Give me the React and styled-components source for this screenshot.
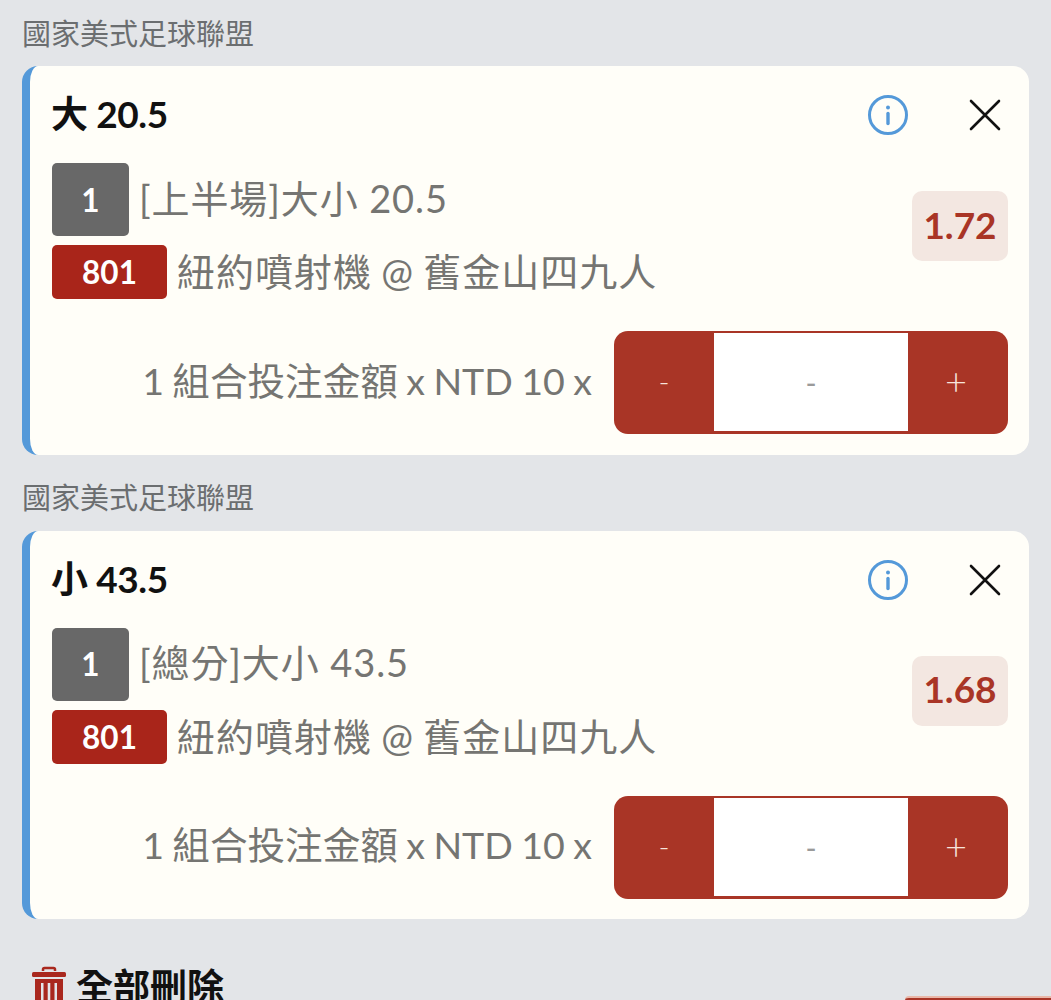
import React from "react";
import styled, { createGlobalStyle } from "styled-components";

const GlobalStyle = createGlobalStyle`
  html, body {
    margin: 0;
    height: 1000px;
    overflow: hidden;
    background: #e3e5e8;
    font-family: Lato, "Noto Sans CJK TC", sans-serif;
  }
`;

const Page = styled.div`
  padding: 13.5px 22px 0;
`;

const LeagueName = styled.div`
  height: 40px;
  font-size: 29px;
  line-height: 40px;
  color: #6b6e70;
`;

const Card = styled.div`
  box-sizing: border-box;
  height: 388.5px;
  margin: 12.5px 0 23.5px;
  padding: 28px 21px 21px 22px;
  background: #fffef8;
  border-left: 8px solid #5499d9;
  border-radius: 16px;
`;

const TitleRow = styled.div`
  display: flex;
  align-items: center;
  height: 42px;
`;

const Title = styled.div`
  flex: 1;
  margin: -2px 0 0 -1px;
  font-size: 37px;
  font-weight: 700;
  line-height: 42px;
  letter-spacing: -0.4px;
  color: #111;
`;

const IconSlot = styled.div`
  display: flex;
  width: 42px;
  height: 42px;
  align-items: center;
  justify-content: center;
`;

const CloseSlot = styled(IconSlot)`
  margin-left: 55px;
  margin-right: 2px;
`;

const Details = styled.div`
  display: flex;
  align-items: flex-start;
  margin-top: 27px;
`;

const Info = styled.div`
  flex: 1;
`;

const InfoRow = styled.div`
  display: flex;
  align-items: center;
  margin-top: ${(p) => p.$gap || 0}px;
`;

const Tag = styled.div`
  box-sizing: border-box;
  display: flex;
  align-items: center;
  justify-content: center;
  width: ${(p) => p.$width}px;
  height: ${(p) => p.$tall}px;
  margin-right: 10px;
  background: ${(p) => p.$bg};
  border-radius: 5px;
  font-size: 31.5px;
  font-weight: 700;
  color: #fff;
`;

const BetName = styled.div`
  position: relative;
  top: -2px;
  font-size: 38px;
  line-height: 44px;
  letter-spacing: 0.9px;
  color: #757572;
`;

const Teams = styled.div`
  position: relative;
  top: -1px;
  font-size: 38px;
  line-height: 44px;
  letter-spacing: 1px;
  word-spacing: -1.5px;
  color: #757572;
`;

const Odds = styled.div`
  box-sizing: border-box;
  display: flex;
  align-items: center;
  justify-content: center;
  width: 96px;
  height: 70px;
  margin-top: 28px;
  padding-bottom: 4px;
  background: #f3e7e1;
  border-radius: 10px;
  font-size: 37px;
  font-weight: 700;
  color: #a93526;
`;

const StakeRow = styled.div`
  display: flex;
  align-items: center;
  justify-content: flex-end;
  margin-top: 32px;
`;

const StakeLabel = styled.div`
  margin-right: 22px;
  padding-bottom: 9px;
  font-size: 37.6px;
  word-spacing: -1.2px;
  color: #757572;
`;

const Stepper = styled.div`
  box-sizing: border-box;
  display: flex;
  width: 394px;
  height: 103px;
  padding: 2px 0 3px;
  background: #a93526;
  border-radius: 14px;
`;

const StepButton = styled.div`
  box-sizing: border-box;
  display: flex;
  width: 100px;
  padding-right: ${(p) => p.$inset || 0}px;
  padding-bottom: 4px;
  align-items: center;
  justify-content: center;
  font-size: ${(p) => p.$size}px;
  font-weight: 300;
  color: #f7e4dc;
`;

const StepValue = styled.div`
  display: flex;
  flex: 1;
  align-items: center;
  justify-content: center;
  background: #fff;
  font-size: 30px;
  color: #9a9a9a;
`;

const Footer = styled.div`
  display: flex;
  align-items: flex-start;
  justify-content: space-between;
  margin-top: 47px;
`;

const ClearAll = styled.div`
  display: flex;
  align-items: center;
  gap: 10px;
  padding-left: 10px;
  font-size: 37px;
  font-weight: 700;
  line-height: 42px;
  color: #111;
`;

const SubmitButton = styled.div`
  width: 146px;
  height: 60px;
  margin: 30px -22px 0 0;
  background: #a93526;
  border-top: 2px solid #e9b7a8;
  border-radius: 4px 0 0 0;
`;

const InfoIcon = () => (
  <svg width="42" height="42" viewBox="0 0 42 42" fill="none">
    <circle cx="21" cy="21" r="18.5" stroke="#5499d9" strokeWidth="3" />
    <circle cx="21" cy="13.5" r="2" fill="#5499d9" />
    <path d="M21 19.5v10" stroke="#5499d9" strokeWidth="3.4" strokeLinecap="round" />
  </svg>
);

const CloseIcon = () => (
  <svg width="36" height="36" viewBox="0 0 36 36" fill="none">
    <path d="M4 4l28 28M32 4L4 32" stroke="#111" strokeWidth="2.6" strokeLinecap="round" />
  </svg>
);

const TrashIcon = () => (
  <svg width="34" height="42" viewBox="0 0 34 42" fill="none">
    <path d="M11 5V3.5A1.5 1.5 0 0 1 12.5 2h9A1.5 1.5 0 0 1 23 3.5V5" stroke="#a9281e" strokeWidth="2.5" />
    <rect x="0" y="6" width="34" height="5" rx="1.5" fill="#a9281e" />
    <path
      d="M3 13h28v24a4 4 0 0 1-4 4H7a4 4 0 0 1-4-4z M9 17v20h2.5V17z M15.7 17v20h2.6V17z M22.5 17v20H25V17z"
      fill="#a9281e"
      fillRule="evenodd"
    />
  </svg>
);

const bets = [
  { title: "大 20.5", market: "[上半場]大小 20.5", odds: "1.72" },
  { title: "小 43.5", market: "[總分]大小 43.5", odds: "1.68" },
];

const BetCard = ({ bet }) => (
  <>
    <LeagueName>國家美式足球聯盟</LeagueName>
    <Card>
      <TitleRow>
        <Title>{bet.title}</Title>
        <IconSlot>
          <InfoIcon />
        </IconSlot>
        <CloseSlot>
          <CloseIcon />
        </CloseSlot>
      </TitleRow>
      <Details>
        <Info>
          <InfoRow>
            <Tag $width={77} $tall={73} $bg="#686868">1</Tag>
            <BetName>{bet.market}</BetName>
          </InfoRow>
          <InfoRow $gap={9}>
            <Tag $width={115} $tall={54} $bg="#a9251a">801</Tag>
            <Teams>紐約噴射機 @ 舊金山四九人</Teams>
          </InfoRow>
        </Info>
        <Odds>{bet.odds}</Odds>
      </Details>
      <StakeRow>
        <StakeLabel>1 組合投注金額 x NTD 10 x</StakeLabel>
        <Stepper>
          <StepButton $size={30}>-</StepButton>
          <StepValue>-</StepValue>
          <StepButton $size={38} $inset={4}>+</StepButton>
        </Stepper>
      </StakeRow>
    </Card>
  </>
);

export default function App() {
  return (
    <Page>
      <GlobalStyle />
      {bets.map((bet) => (
        <BetCard key={bet.title} bet={bet} />
      ))}
      <Footer>
        <ClearAll>
          <TrashIcon />
          全部刪除
        </ClearAll>
        <SubmitButton />
      </Footer>
    </Page>
  );
}
